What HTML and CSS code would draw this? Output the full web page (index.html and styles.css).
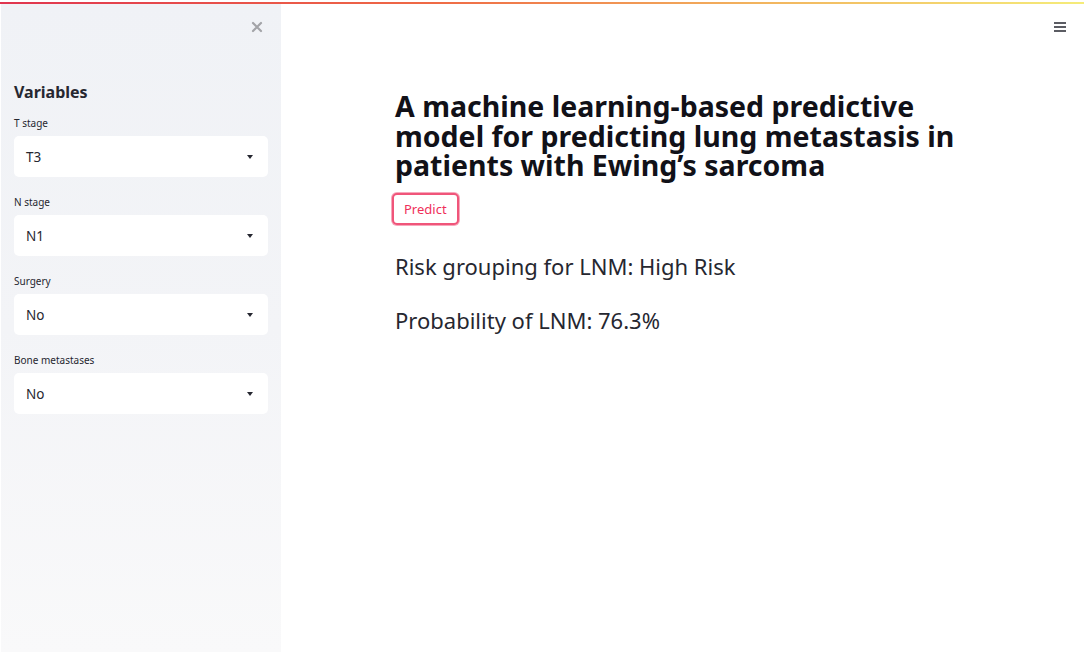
FILE: index.html
```html
<!DOCTYPE html>
<html lang="en">
<head>
<meta charset="utf-8">
<title>LNM prediction</title>
<link rel="stylesheet" href="styles.css">
</head>
<body>
<div class="topbar"></div>
<div class="app">
  <aside class="sidebar">
    <div class="close-row">
      <svg class="close" viewBox="0 0 12 12" width="12" height="12"><path d="M2 2 L10 10 M10 2 L2 10" stroke="#a3a4a8" stroke-width="2.2" stroke-linecap="round"/></svg>
    </div>
    <h2 class="side-title">Variables</h2>
    <div class="field">
      <div class="label">T stage</div>
      <div class="select"><span>T3</span><span class="caret"></span></div>
    </div>
    <div class="field">
      <div class="label">N stage</div>
      <div class="select"><span>N1</span><span class="caret"></span></div>
    </div>
    <div class="field">
      <div class="label">Surgery</div>
      <div class="select"><span>No</span><span class="caret"></span></div>
    </div>
    <div class="field">
      <div class="label">Bone metastases</div>
      <div class="select"><span>No</span><span class="caret"></span></div>
    </div>
  </aside>
  <main class="main">
    <div class="menu-row">
      <svg class="menu" viewBox="0 0 12 10" width="12" height="10"><path d="M0 1 H12 M0 5 H12 M0 9 H12" stroke="#262730" stroke-width="1.4"/></svg>
    </div>
    <div class="content">
      <h1 class="title">A machine learning-based predictive model for predicting lung metastasis in patients with Ewing’s sarcoma</h1>
      <button class="btn">Predict</button>
      <p class="result">Risk grouping for LNM: High Risk</p>
      <p class="result">Probability of LNM: 76.3%</p>
    </div>
  </main>
</div>
</body>
</html>
```
FILE: styles.css
```css
html, body {
  margin: 0;
  padding: 0;
  background: #ffffff;
  font-family: "Noto Sans", "Open Sans", sans-serif;
  color: #262730;
}
.topbar {
  margin-top: 2px;
  height: 2px;
  background: linear-gradient(90deg, #e0354f 0%, #ef6a45 40%, #f2b45e 70%, #f5ec7a 100%);
}
.app {
  display: flex;
  height: 648px;
}
.sidebar {
  width: 280px;
  margin-left: 1px;
  background: linear-gradient(180deg, #f0f2f6 0%, #f3f4f7 50%, #f9f9fa 100%);
  padding: 0 13px;
  box-sizing: border-box;
}
.close-row {
  display: flex;
  justify-content: flex-end;
  padding-top: 17px;
  padding-right: 5px;
}
.close { display: block; }
.side-title {
  margin: 49px 0 0 0;
  font-size: 16px;
  font-weight: 700;
  line-height: 20px;
}
.field { margin-top: 14px; }
.field + .field { margin-top: 18px; }
.label {
  font-size: 10px;
  line-height: 14px;
  color: #262730;
}
.select {
  margin-top: 6px;
  height: 41px;
  background: #ffffff;
  border-radius: 5px;
  display: flex;
  align-items: center;
  justify-content: space-between;
  padding: 0 15px 0 12px;
  font-size: 13.5px;
}
.caret {
  width: 0;
  height: 0;
  border-left: 3.5px solid transparent;
  border-right: 3.5px solid transparent;
  border-top: 4px solid #262730;
}
.main {
  flex: 1;
  display: flex;
  flex-direction: column;
}
.menu-row {
  display: flex;
  justify-content: flex-end;
  padding: 18px 18px 0 0;
}
.menu { display: block; }
.content {
  padding-left: 114px;
  width: 600px;
}
.title {
  margin: 60px 0 0 0;
  font-size: 28.5px;
  font-weight: 700;
  line-height: 29.5px;
  color: #111118;
}
.btn {
  margin-top: 12px;
  margin-left: -3px;
  height: 32px;
  padding: 0 10px;
  background: #fff;
  border: 2px solid #f0557a;
  box-shadow: 0 0 0 1px #f7a8bc;
  border-radius: 5px;
  color: #ef2f5a;
  font-family: "Noto Sans", sans-serif;
  font-size: 13px;
}
.result {
  margin: 27px 0 0 0;
  font-size: 22px;
  line-height: 28px;
}
.result + .result { margin-top: 26px; }
```
